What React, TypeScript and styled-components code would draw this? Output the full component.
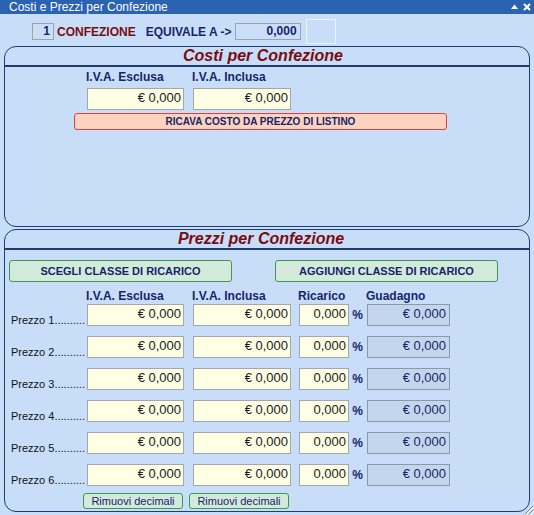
import React from "react";
import styled, { createGlobalStyle } from "styled-components";

const Global = createGlobalStyle`
  html, body { margin: 0; padding: 0; background: #c8def8; }
  body { font-family: "Liberation Sans", Arial, sans-serif; }
  * { box-sizing: border-box; }
`;

const NAVY = "#16246c";
const RED = "#7a0c12";
const LINE = "#1f3d6e";

const Window = styled.div`
  position: relative;
  width: 534px;
  height: 515px;
  background: #c8def8;
  display: flex;
  flex-direction: column;
  overflow: hidden;
`;

const TitleBar = styled.div`
  height: 14px;
  background: #2b63b3;
  color: #ffffff;
  font-size: 12px;
  line-height: 14px;
  padding: 0 3px 0 9px;
  display: flex;
  align-items: center;
  justify-content: space-between;
`;

const TitleIcons = styled.div`
  display: flex;
  align-items: center;
  gap: 5px;
`;

const TopRow = styled.div`
  height: 32px;
  padding: 3px 0 0 32px;
  display: flex;
  align-items: center;
`;

const SmallBox = styled.div<{ $w: number }>`
  width: ${(p) => p.$w}px;
  height: 17px;
  border: 1px solid #9aa3ae;
  background: #cadff7;
  color: ${NAVY};
  font-size: 12px;
  font-weight: bold;
  line-height: 15px;
  text-align: right;
  padding-right: 3px;
`;

const EmptyBox = styled.div`
  width: 30px;
  height: 25px;
  margin-left: 5px;
  border: 1px solid #eef4fc;
  background: #c8def8;
`;

const BoldText = styled.span<{ $color: string; $ml: number }>`
  font-size: 12px;
  font-weight: bold;
  color: ${(p) => p.$color};
  margin-left: ${(p) => p.$ml}px;
  margin-right: 3px;
  white-space: nowrap;
`;

const Panel = styled.div<{ $h: number; $mt: number }>`
  margin: ${(p) => p.$mt}px 4px 0 4px;
  height: ${(p) => p.$h}px;
  border: 1px solid ${LINE};
  border-radius: 12px;
  display: flex;
  flex-direction: column;
`;

const PanelTitle = styled.div<{ $shift: number }>`
  height: 20px;
  border-bottom: 2px solid ${LINE};
  color: ${RED};
  font-size: 16px;
  font-weight: bold;
  font-style: italic;
  line-height: 18px;
  text-align: center;
  padding-right: ${(p) => p.$shift}px;
`;

const FieldGrid = styled.div<{ $mt: number }>`
  display: grid;
  grid-template-columns: 76px 106px 106px 50px 18px 83px;
  align-items: stretch;
  padding-left: 6px;
  margin-top: ${(p) => p.$mt}px;
`;

const HeadLabel = styled.div<{ $col: number }>`
  grid-column: ${(p) => p.$col};
  margin-left: -1px;
  font-size: 12px;
  font-weight: bold;
  line-height: 14px;
  color: ${NAVY};
  white-space: nowrap;
`;

const Field = styled.div<{ $col: number; $w: number; $readonly?: boolean }>`
  grid-column: ${(p) => p.$col};
  width: ${(p) => p.$w}px;
  height: 22px;
  border: 1px solid ${(p) => (p.$readonly ? "#8e97a4" : "#a6a6a6")};
  background: ${(p) => (p.$readonly ? "#c4d6ec" : "#ffffe6")};
  color: ${(p) => (p.$readonly ? NAVY : "#1a1a1a")};
  font-size: 13px;
  line-height: 18px;
  text-align: right;
  padding: 0 ${(p) => (p.$readonly ? 3 : 2)}px 2px 0;
  white-space: nowrap;
`;

const RowLabel = styled.div`
  grid-column: 1;
  align-self: end;
  font-size: 11px;
  line-height: 12px;
  color: #111;
  white-space: nowrap;
`;

const Percent = styled.div`
  grid-column: 5;
  font-size: 12px;
  font-weight: bold;
  color: ${NAVY};
  line-height: 22px;
  text-align: center;
  padding-right: 1px;
`;

const RedButton = styled.div`
  margin: 3px 0 0 69px;
  width: 373px;
  height: 17px;
  border: 1px solid #e0403a;
  border-radius: 3px;
  background: #fcd3bf;
  color: ${NAVY};
  font-size: 10px;
  font-weight: bold;
  line-height: 15px;
  text-align: center;
`;

const ButtonRow = styled.div<{ $mt: number; $pl: number; $gap: number }>`
  display: flex;
  margin-top: ${(p) => p.$mt}px;
  padding-left: ${(p) => p.$pl}px;
  gap: ${(p) => p.$gap}px;
`;

const GreenButton = styled.div<{ $w: number; $h: number; $bold?: boolean }>`
  width: ${(p) => p.$w}px;
  height: ${(p) => p.$h}px;
  border: 1px solid #3d9a52;
  border-radius: 3px;
  background: #d3eadb;
  color: ${NAVY};
  font-size: 11px;
  font-weight: ${(p) => (p.$bold ? "bold" : "normal")};
  line-height: ${(p) => p.$h - 2}px;
  text-align: center;
  white-space: nowrap;
`;

const Rows = styled.div`
  display: flex;
  flex-direction: column;
  gap: 10px;
  margin-top: 1px;
`;

const Grip = styled.svg`
  position: absolute;
  right: 0;
  bottom: 0;
`;

const rows = [1, 2, 3, 4, 5, 6];

export default function App() {
  return (
    <>
      <Global />
      <Window>
        <TitleBar>
          <span>Costi e Prezzi per Confezione</span>
          <TitleIcons>
            <svg width="7" height="6" viewBox="0 0 7 6">
              <polygon points="0,5 3.5,0.5 7,5" fill="#fff" />
            </svg>
            <svg width="8" height="8" viewBox="0 0 8 8">
              <path d="M1 1 L7 7 M7 1 L1 7" stroke="#fff" strokeWidth="2" />
            </svg>
          </TitleIcons>
        </TitleBar>

        <TopRow>
          <SmallBox $w={22}>1</SmallBox>
          <BoldText $color={RED} $ml={3}>CONFEZIONE</BoldText>
          <BoldText $color={NAVY} $ml={7}>EQUIVALE A -&gt;</BoldText>
          <SmallBox $w={66}>0,000</SmallBox>
          <EmptyBox />
        </TopRow>

        <Panel $h={181} $mt={0}>
          <PanelTitle $shift={8}>Costi per Confezione</PanelTitle>
          <FieldGrid $mt={3}>
            <HeadLabel $col={2}>I.V.A. Esclusa</HeadLabel>
            <HeadLabel $col={3}>I.V.A. Inclusa</HeadLabel>
          </FieldGrid>
          <FieldGrid $mt={4}>
            <Field $col={2} $w={97}>€ 0,000</Field>
            <Field $col={3} $w={98}>€ 0,000</Field>
          </FieldGrid>
          <RedButton>RICAVA COSTO DA PREZZO DI LISTINO</RedButton>
        </Panel>

        <Panel $h={283} $mt={2}>
          <PanelTitle $shift={12}>Prezzi per Confezione</PanelTitle>
          <ButtonRow $mt={10} $pl={4} $gap={43}>
            <GreenButton $w={223} $h={22} $bold>SCEGLI CLASSE DI RICARICO</GreenButton>
            <GreenButton $w={223} $h={22} $bold>AGGIUNGI CLASSE DI RICARICO</GreenButton>
          </ButtonRow>
          <FieldGrid $mt={7}>
            <HeadLabel $col={2}>I.V.A. Esclusa</HeadLabel>
            <HeadLabel $col={3}>I.V.A. Inclusa</HeadLabel>
            <HeadLabel $col={4}>Ricarico</HeadLabel>
            <HeadLabel $col={6}>Guadagno</HeadLabel>
          </FieldGrid>
          <Rows>
            {rows.map((n) => (
              <FieldGrid $mt={0} key={n}>
                <RowLabel>{`Prezzo ${n}..........`}</RowLabel>
                <Field $col={2} $w={97}>€ 0,000</Field>
                <Field $col={3} $w={98}>€ 0,000</Field>
                <Field $col={4} $w={50}>0,000</Field>
                <Percent>%</Percent>
                <Field $col={6} $w={83} $readonly>€ 0,000</Field>
              </FieldGrid>
            ))}
          </Rows>
          <ButtonRow $mt={7} $pl={78} $gap={6}>
            <GreenButton $w={100} $h={16}>Rimuovi decimali</GreenButton>
            <GreenButton $w={100} $h={16}>Rimuovi decimali</GreenButton>
          </ButtonRow>
        </Panel>

        <Grip width="12" height="12" viewBox="0 0 12 12">
          <path d="M11 3 L3 11 M11 7 L7 11" stroke="#8a8a8a" strokeWidth="1" />
          <path d="M12 4 L4 12 M12 8 L8 12" stroke="#ffffff" strokeWidth="1" />
        </Grip>
      </Window>
    </>
  );
}
